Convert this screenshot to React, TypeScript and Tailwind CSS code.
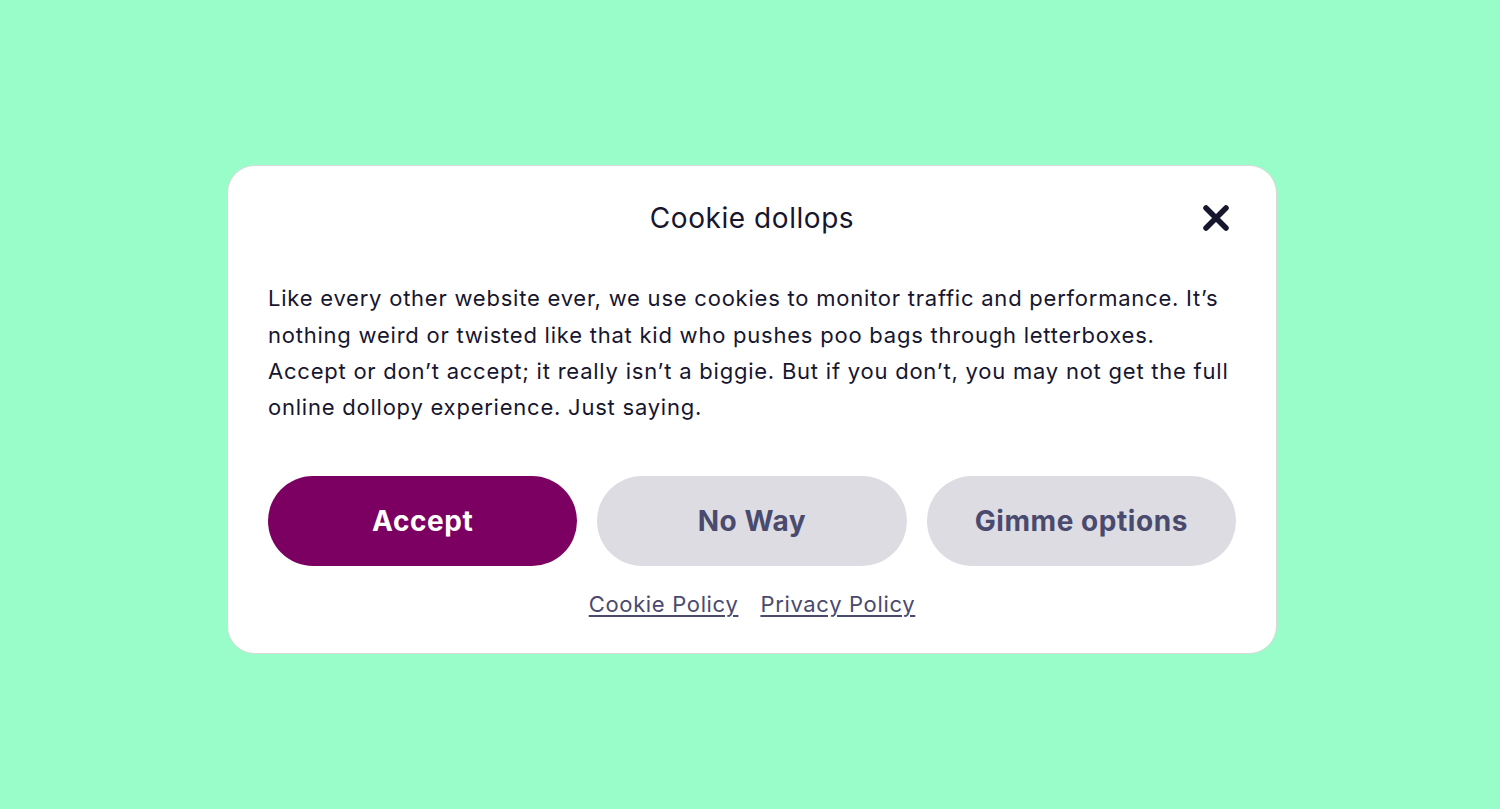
export default function App() {
  return (
    <div
      className="min-h-screen w-full bg-[#99fdc9] flex items-center justify-center pt-[10px] pl-[4px]"
      style={{ fontFamily: "Inter, 'Noto Sans', sans-serif" }}
    >
      <div className="w-[1050px] rounded-[28px] border border-[#d9d9d9] bg-white px-10 pt-[34px] pb-[33px] text-[#16162e]">
        <div className="relative flex items-center justify-center h-9">
          <h2 className="text-[28px] leading-9 font-normal tracking-[0.02em]">Cookie dollops</h2>
          <button
            type="button"
            aria-label="Close"
            className="absolute right-[5px] top-1/2 -translate-y-1/2 text-[#16162e]"
          >
            <svg width="30" height="30" viewBox="0 0 30 30" fill="none">
              <path
                d="M5 5L25 25M25 5L5 25"
                stroke="currentColor"
                strokeWidth="5.5"
                strokeLinecap="round"
              />
            </svg>
          </button>
        </div>

        <p className="mt-[44px] text-[22px] leading-[36.3px] tracking-[0.035em]">
          Like every other website ever, we use cookies to monitor traffic and performance. It’s
          nothing weird or twisted like that kid who pushes poo bags through letterboxes. Accept or
          don’t accept; it really isn’t a biggie. But if you don’t, you may not get the full online
          dollopy experience. Just saying.
        </p>

        <div className="mt-[50px] grid grid-cols-3 gap-5">
          <button className="h-[90px] rounded-full bg-[#7b0062] text-white text-[28px] font-bold tracking-[0.02em]">
            Accept
          </button>
          <button className="h-[90px] rounded-full bg-[#dcdce2] text-[#4a4a6e] text-[28px] font-bold tracking-[0.02em]">
            No Way
          </button>
          <button className="h-[90px] rounded-full bg-[#dcdce2] text-[#4a4a6e] text-[28px] font-bold tracking-[0.02em]">
            Gimme options
          </button>
        </div>

        <div className="mt-[22px] flex justify-center gap-[22px] text-[22px] leading-8 tracking-[0.03em] text-[#4a4a6e]">
          <a href="#" className="underline underline-offset-[3px]">
            Cookie Policy
          </a>
          <a href="#" className="underline underline-offset-[3px]">
            Privacy Policy
          </a>
        </div>
      </div>
    </div>
  );
}
